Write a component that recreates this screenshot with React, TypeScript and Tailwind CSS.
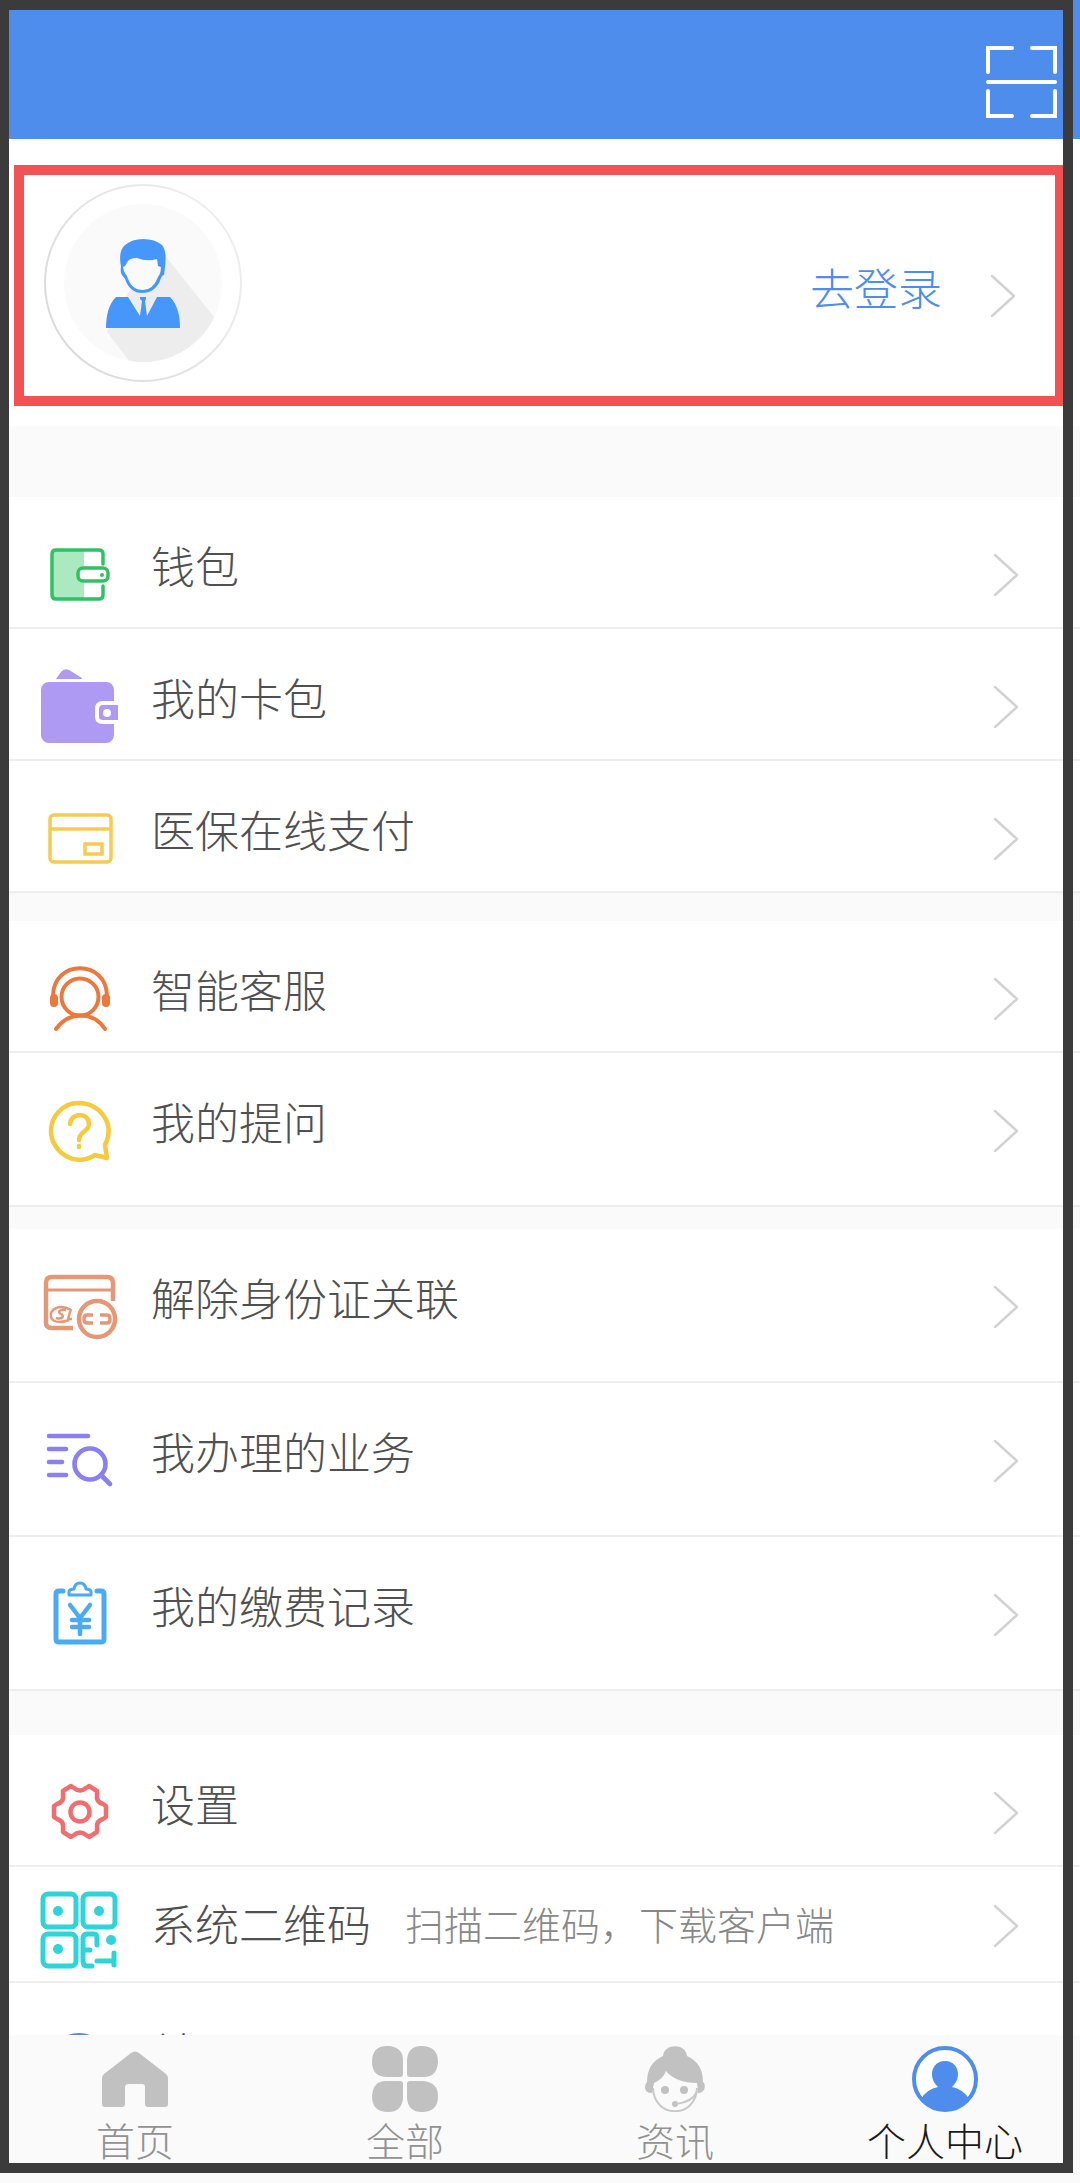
import React from 'react';

type IconProps = { className?: string };

type Row = {
    label: string;
    hint?: string;
    icon: React.FC<IconProps>;
    size: 'normal' | 'tall' | 'short';
};

const ScanIcon: React.FC<IconProps> = ({ className }) => (
    <svg className={className} viewBox="0 0 72 74" fill="none" stroke="currentColor" strokeWidth="4" strokeLinecap="round">
        <path d="M2 27V3H26M46 3H69V27M2 46V71H26M46 71H69V46M2 37H69" />
    </svg>
);

const Chevron: React.FC<IconProps> = ({ className }) => (
    <svg className={className} viewBox="0 0 26 44" fill="none" stroke="currentColor" strokeWidth="2.4" strokeLinecap="round" strokeLinejoin="round">
        <path d="M2 2L24 22L2 42" />
    </svg>
);

const Avatar: React.FC<IconProps> = ({ className }) => (
    <svg className={className} viewBox="0 0 200 200">
        <defs>
            <linearGradient id="rim" x1="0" y1="0.8" x2="1" y2="0.2">
                <stop offset="0" stopColor="#d9d9d9" />
                <stop offset="1" stopColor="#f0f0f0" />
            </linearGradient>
            <clipPath id="disc">
                <circle cx="100" cy="100" r="79" />
            </clipPath>
        </defs>
        <circle cx="100" cy="100" r="98" fill="#fff" stroke="url(#rim)" strokeWidth="2" />
        <circle cx="100" cy="100" r="79" fill="#fafafa" />
        <path d="M120 70L171 134L190 200H103L64 149L85 110Z" fill="#ededed" clipPath="url(#disc)" />
        <path d="M82 75L118 78L116 96Q111 108 100 108Q89 108 84 96Z" fill="#fafafa" />
        <path d="M78 84Q75 68 82 62Q89 56 100 56Q112 56 119 62Q124 68 122 84L121 92Q119 92 118 95Q113 110 99 110Q87 110 82 96L79 92Q77 89 78 84ZM82 83L80 84Q81 90 84 93Q88 107 100 107Q110 107 115 94Q118 90 118 84L115 83L114 76Q104 79 94 75Q87 75 85 78Z" fill="#4797fb" fillRule="evenodd" />
        <path d="M63 145Q63 124 73 114H85L97 133L99 118L97 116V114H103V116L102 118L104 133L114 114H127Q137 124 137 145Z" fill="#4797fb" />
    </svg>
);

const WalletIcon: React.FC<IconProps> = ({ className }) => (
    <svg className={className} viewBox="0 0 78 78" fill="none" stroke="#2fc164" strokeWidth="3.5">
        <path d="M13 15H44V62H13Z" fill="#abeac0" stroke="none" />
        <path d="M63 28V18Q63 14 59 14H16Q12 14 12 18V59Q12 63 16 63H59Q63 63 63 59V50" strokeLinecap="round" />
        <rect x="38" y="32" width="30" height="13" rx="5" fill="#fff" />
        <circle cx="62" cy="39" r="2" fill="#2fc164" stroke="none" />
    </svg>
);

const CardHolderIcon: React.FC<IconProps> = ({ className }) => (
    <svg className={className} viewBox="0 0 78 78" fill="#ae9af3">
        <path d="M16 11L21 4Q24 0 29 2L42 10V11Z" />
        <rect x="1" y="14" width="73" height="61" rx="8" />
        <path d="M79 35H63Q57 35 57 41V49Q57 54 63 54H79" stroke="#fff" strokeWidth="4" />
        <circle cx="67" cy="45" r="4" fill="#fff" />
    </svg>
);

const CardIcon: React.FC<IconProps> = ({ className }) => (
    <svg className={className} viewBox="0 0 78 78" fill="none" stroke="#f5ca55" strokeWidth="3.5">
        <rect x="10" y="15" width="61" height="47" rx="4" />
        <path d="M10 29H71M45 44H62V54H45Z" />
    </svg>
);

const ServiceIcon: React.FC<IconProps> = ({ className }) => (
    <svg className={className} viewBox="0 0 78 78" fill="none" stroke="#e8793f" strokeWidth="4" strokeLinecap="round">
        <path d="M13 36C13 -1 67 -1 67 36" />
        <path d="M14 38V43M66 38V43" strokeWidth="8" />
        <circle cx="40" cy="37" r="18.5" />
        <path d="M16 69C29 51 53 51 65 69" />
    </svg>
);

const QuestionIcon: React.FC<IconProps> = ({ className }) => (
    <svg className={className} viewBox="0 0 78 78" fill="none" stroke="#f5ca3f" strokeWidth="4.5" strokeLinecap="round" strokeLinejoin="round">
        <path d="M65 53C76 31 59 11 39 11C22 11 11 25 11 39C11 60 35 76 55 63L67 66Z" />
        <path d="M30 32C31 20 49 20 49 32C49 40 39 39 39 48M39 54V55" />
    </svg>
);

const UnlinkIcon: React.FC<IconProps> = ({ className }) => (
    <svg className={className} viewBox="0 0 78 78" fill="none" stroke="#e49878" strokeWidth="4.5">
        <path d="M73 33V15Q73 9 67 9H12Q6 9 6 15V55Q6 60 12 60H33" />
        <path d="M6 22H73" strokeWidth="3" />
        <circle cx="57" cy="51" r="18" />
        <path d="M53 47H47Q44 47 44 51Q44 55 47 55H53M60 47H67Q70 47 70 51Q70 55 67 55H60" strokeWidth="3.5" />
        <path d="M31 42C19 35 9 42 11 49C13 56 24 54 29 52M26 42C20 41 17 44 21 46C25 48 22 52 16 50M31 41L28 51H32" strokeWidth="2.5" />
    </svg>
);

const SearchListIcon: React.FC<IconProps> = ({ className }) => (
    <svg className={className} viewBox="0 0 78 78" fill="none" stroke="#8b80f2" strokeWidth="4.6" strokeLinecap="round">
        <path d="M9 14H48M9 27H26M9 40H22M9 53H26M61 53L70 62" />
        <circle cx="50" cy="42" r="15.5" />
    </svg>
);

const BillIcon: React.FC<IconProps> = ({ className }) => (
    <svg className={className} viewBox="0 0 78 78" fill="none" stroke="#4babf2" strokeWidth="5" strokeLinecap="round" strokeLinejoin="round">
        <path d="M23 15H19Q16 15 16 18V63Q16 66 19 66H61Q64 66 64 63V18Q64 15 61 15H57" />
        <path d="M29 19V16Q29 13 34 13Q35 7 40 7Q45 7 46 13Q51 13 51 16V19Z" strokeWidth="3" />
        <path d="M30 29L40 42L50 29M40 42V58M32 44H49M32 51H49" strokeWidth="4.5" />
    </svg>
);

const GearIcon: React.FC<IconProps> = ({ className }) => (
    <svg className={className} viewBox="0 0 78 78" fill="none" stroke="#f06d70" strokeWidth="4.5" strokeLinejoin="round">
        <path d="M31 12L34 14Q40 19 46 14L49 12L57 17V21Q56 28 63 30L66 32V43L63 45Q56 47 57 54V58L49 63L46 61Q40 56 34 61L31 63L23 58V54Q24 47 17 45L14 43V32L17 30Q24 28 23 21V17Z" />
        <circle cx="40" cy="38" r="9.5" />
    </svg>
);

const QrIcon: React.FC<IconProps> = ({ className }) => (
    <svg className={className} viewBox="0 0 78 78" fill="none" stroke="#2fd4d8" strokeWidth="5" strokeLinecap="round">
        <rect x="3" y="3" width="33" height="33" rx="5" />
        <rect x="43" y="3" width="32" height="33" rx="5" />
        <rect x="3" y="43" width="33" height="32" rx="5" />
        <path d="M52 75H47Q43 75 43 70V48Q43 43 47 43H54Q57 43 57 47V54M44 59H50M57 70H74M74 62V74" />
        <g fill="#2fd4d8" stroke="none">
            <circle cx="18" cy="20" r="5" />
            <circle cx="59" cy="20" r="5" />
            <circle cx="18" cy="58" r="5" />
            <circle cx="71" cy="49" r="5" />
        </g>
    </svg>
);

const AboutIcon: React.FC<IconProps> = ({ className }) => (
    <svg className={className} viewBox="0 0 78 78" fill="none" stroke="#5b85e8" strokeWidth="4" strokeLinecap="round">
        <circle cx="39" cy="41" r="28" />
        <path d="M39 27V28M39 37V55" />
    </svg>
);

const HomeIcon: React.FC<IconProps> = ({ className }) => (
    <svg className={className} viewBox="0 0 66 66" fill="#c1c1c1">
        <path d="M0 32Q0 30 2 28L29 7Q33 4 37 7L64 28Q66 30 66 32V58Q66 61 63 61H46Q43 61 43 58V41Q43 38 40 38H27Q23 38 23 41V58Q23 61 20 61H3Q0 61 0 58Z" />
    </svg>
);

const AllIcon: React.FC<IconProps> = ({ className }) => (
    <svg className={className} viewBox="0 0 66 66" fill="#c1c1c1">
        <path d="M15 0H18Q31 2 31 14V28Q31 31 28 31H14Q0 30 0 16Q0 0 15 0ZM49 0Q66 0 66 16Q65 31 52 31H38Q35 31 35 28V14Q36 0 49 0ZM14 35H28Q31 35 31 38V52Q30 66 16 66Q0 66 0 50Q1 35 14 35ZM38 35H52Q66 37 66 50Q66 66 50 66Q36 66 35 52V38Q35 35 38 35Z" />
    </svg>
);

const NewsIcon: React.FC<IconProps> = ({ className }) => (
    <svg className={className} viewBox="0 0 66 66">
        <path d="M11 42C12 73 54 73 55 42" fill="#fafafa" stroke="#c8c8c8" strokeWidth="2" />
        <path d="M21 10C22 -3 44 -3 45 10Q61 17 61 36Q64 38 62 44Q60 47 56 47Q56 43 55 37Q34 37 24 25Q21 33 12 37L10 47Q3 47 3 41Q3 38 5 36Q5 17 21 10Z" fill="#c1c1c1" />
        <circle cx="23" cy="44" r="4" fill="#c1c1c1" />
        <circle cx="42" cy="44" r="4" fill="#c1c1c1" />
        <circle cx="33" cy="58" r="3" fill="#c1c1c1" />
        <path d="M34 58Q50 56 55 46" fill="none" stroke="#c8c8c8" strokeWidth="2" />
    </svg>
);

const MeIcon: React.FC<IconProps> = ({ className }) => (
    <svg className={className} viewBox="0 0 66 66">
        <circle cx="33" cy="33" r="31" fill="#fff" stroke="#4f8ded" strokeWidth="4" />
        <path d="M33 15C42 15 46 22 46 28C46 34 43 38 40 41Q51 43 57 53Q46 66 33 65Q20 66 9 53Q15 43 26 41C23 38 20 34 20 28C20 22 24 15 33 15Z" fill="#4f8ded" />
    </svg>
);

const groups: { gap: string; rows: Row[] }[] = [
    {
        gap: 'mt-[71px]',
        rows: [
            { label: '钱包', icon: WalletIcon, size: 'normal' },
            { label: '我的卡包', icon: CardHolderIcon, size: 'normal' },
            { label: '医保在线支付', icon: CardIcon, size: 'normal' },
        ],
    },
    {
        gap: 'mt-7',
        rows: [
            { label: '智能客服', icon: ServiceIcon, size: 'normal' },
            { label: '我的提问', icon: QuestionIcon, size: 'tall' },
        ],
    },
    {
        gap: 'mt-[22px]',
        rows: [
            { label: '解除身份证关联', icon: UnlinkIcon, size: 'tall' },
            { label: '我办理的业务', icon: SearchListIcon, size: 'tall' },
            { label: '我的缴费记录', icon: BillIcon, size: 'tall' },
        ],
    },
    {
        gap: 'mt-11',
        rows: [
            { label: '设置', icon: GearIcon, size: 'normal' },
            { label: '系统二维码', hint: '扫描二维码，下载客户端', icon: QrIcon, size: 'short' },
            { label: '关于', icon: AboutIcon, size: 'normal' },
        ],
    },
];

const rowStyles = {
    normal: { row: 'pt-[39px] pb-[13px]', text: 'pb-5', arrow: '' },
    tall: { row: 'pt-[39px] pb-[35px]', text: 'pb-5', arrow: '' },
    short: { row: 'pt-6 pb-3', text: 'pb-3.5', arrow: 'mb-2' },
};

const tabs = [
    { label: '首页', icon: HomeIcon, active: false },
    { label: '全部', icon: AllIcon, active: false },
    { label: '资讯', icon: NewsIcon, active: false },
    { label: '个人中心', icon: MeIcon, active: true },
];

const MenuRow: React.FC<{ row: Row }> = ({ row }) => {
    const Icon = row.icon;
    const styles = rowStyles[row.size];
    return (
        <li>
            <a href="#" className={`flex items-center border-b-2 border-[#eeeeee] bg-white pl-10 pr-[61px] ${styles.row}`}>
                <Icon className="size-[78px] shrink-0" />
                <span className={`ml-[33px] text-[44px] leading-[58px] text-[#505050] ${styles.text}`}>{row.label}</span>
                {row.hint && <span className={`ml-[34px] text-[39px] leading-[58px] text-[#888888] ${styles.text}`}>{row.hint}</span>}
                <Chevron className={`ml-auto h-11 w-[26px] shrink-0 text-[#d2d2d2] ${styles.arrow}`} />
            </a>
        </li>
    );
};

export default function App() {
    return (
        <div className="relative flex h-screen flex-col overflow-hidden bg-[#fafafa] font-['Noto_Sans_CJK_SC',sans-serif] font-light">
            <header className="flex h-[139px] shrink-0 items-center justify-end bg-[#4f8ded] pt-6 pr-[22px]">
                <button type="button" aria-label="扫一扫">
                    <ScanIcon className="h-[74px] w-[72px] text-white" />
                </button>
            </header>

            <main className="min-h-0 flex-1 overflow-hidden">
                <section className="bg-white pt-[26px] pr-[15px] pb-5 pl-[14px]">
                    <a href="#" className="flex items-center border-10 border-[#f15354] pt-2 pr-[39px] pb-[13px] pl-[19px]">
                        <Avatar className="size-[200px]" />
                        <span className="ml-auto pt-2 text-[44px] leading-[62px] text-[#4f8ded]">去登录</span>
                        <Chevron className="ml-12 mt-[26px] h-11 w-[26px] text-[#d2d2d2]" />
                    </a>
                </section>

                {groups.map((group) => (
                    <ul key={group.rows[0].label} className={group.gap}>
                        {group.rows.map((row) => (
                            <MenuRow key={row.label} row={row} />
                        ))}
                    </ul>
                ))}
            </main>

            <nav className="grid h-[148px] shrink-0 grid-cols-4 bg-[#fafafa] pt-[11px]">
                {tabs.map(({ label, icon: Icon, active }) => (
                    <a key={label} href="#" className="flex flex-col items-center">
                        <Icon className="size-[66px]" />
                        <span className={`text-[39px] leading-[54px] ${active ? 'text-[#1a1a1a]' : 'text-[#929292]'}`}>{label}</span>
                    </a>
                ))}
            </nav>

            {/* Dark outline drawn over the whole screen */}
            <div className="pointer-events-none absolute top-0 right-[7px] bottom-[10px] left-0 border-10 border-l-9 border-[#3b3b3b]" />
        </div>
    );
}
